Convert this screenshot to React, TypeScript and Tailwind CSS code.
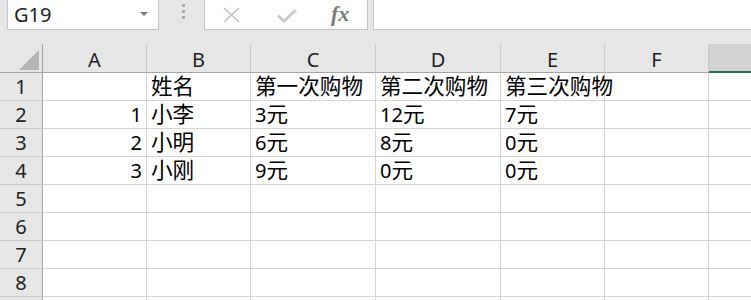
import React from "react";

const cols = [
  { label: "A", w: "w-[104px]" },
  { label: "B", w: "w-[104px]" },
  { label: "C", w: "w-[125px]" },
  { label: "D", w: "w-[125px]" },
  { label: "E", w: "w-[104px]" },
  { label: "F", w: "w-[104px]" },
];

type Cell = { t: string; right?: boolean };
const data: Cell[][] = [
  [{ t: "" }, { t: "姓名" }, { t: "第一次购物" }, { t: "第二次购物" }, { t: "第三次购物" }, { t: "" }],
  [{ t: "1", right: true }, { t: "小李" }, { t: "3元" }, { t: "12元" }, { t: "7元" }, { t: "" }],
  [{ t: "2", right: true }, { t: "小明" }, { t: "6元" }, { t: "8元" }, { t: "0元" }, { t: "" }],
  [{ t: "3", right: true }, { t: "小刚" }, { t: "9元" }, { t: "0元" }, { t: "0元" }, { t: "" }],
  [], [], [], [], [],
];

const font = { fontFamily: '"Noto Sans", "Noto Sans CJK SC", sans-serif' };

function Text({ t }: { t: string }) {
  const parts = t.match(/[\u4e00-\u9fff]+|[^\u4e00-\u9fff]+/g) || [];
  return (
    <span className="relative z-10">
      {parts.map((p, i) =>
        /[\u4e00-\u9fff]/.test(p) ? (
          <span key={i} className="text-[21.6px]">
            {p}
          </span>
        ) : (
          <span key={i}>{p}</span>
        )
      )}
    </span>
  );
}

export default function App() {
  return (
    <div
      className="w-[751px] h-[300px] overflow-hidden bg-[#e6e6e6] text-black"
      style={font}
    >
      {/* formula bar */}
      <div className="flex h-[30px]">
        <div className="ml-[7px] w-[152px] h-[30px] bg-white border border-t-0 border-[#c6c6c6] flex items-center justify-between pl-[6px] pr-[10px]">
          <span className="text-[20px] leading-none text-[#222]">G19</span>
          <svg width="8" height="5" viewBox="0 0 8 5">
            <path d="M0 0 L8 0 L4 4 Z" fill="#7a7a7a" />
          </svg>
        </div>
        <div className="w-[45px] flex justify-center pt-[4px] pl-[3px]">
          <div className="flex flex-col gap-[3px]">
            <div className="w-[3px] h-[3px] bg-[#a8a8a8]" />
            <div className="w-[3px] h-[3px] bg-[#a8a8a8]" />
            <div className="w-[3px] h-[3px] bg-[#a8a8a8]" />
          </div>
        </div>
        <div className="w-[164px] h-[30px] bg-white border border-t-0 border-[#c6c6c6] flex items-center">
          <svg className="ml-[17px]" width="20" height="16" viewBox="0 0 20 16">
            <path d="M2 1 L17 15 M17 1 L2 15" stroke="#c3c3c3" strokeWidth="1.6" />
          </svg>
          <svg className="ml-[35px]" width="20" height="16" viewBox="0 0 20 16">
            <path d="M1 8.5 L7 14 L19 3" stroke="#cdcdcd" strokeWidth="3" fill="none" />
          </svg>
          <span
            className="ml-[34px] text-[22px] leading-none italic font-bold text-[#7a7a7a] -mt-[2px]"
            style={{ fontFamily: '"Liberation Serif", serif' }}
          >
            fx
          </span>
        </div>
        <div className="ml-[5px] flex-1 h-[30px] bg-white border border-t-0 border-r-0 border-[#c6c6c6]" />
      </div>

      <div className="h-[14px]" />

      {/* column header */}
      <div className="flex h-[29px]">
        <div className="w-[43px] h-[29px] border-r border-b border-[#a6a6a6] flex items-end justify-end pr-[3px] pb-[2px]">
          <svg width="20" height="20" viewBox="0 0 20 20">
            <path d="M20 0 L20 20 L0 20 Z" fill="#b5b5b5" />
          </svg>
        </div>
        {cols.map((c) => (
          <div
            key={c.label}
            className={`${c.w} h-[29px] border-b border-b-[#a6a6a6] border-r border-r-[#cacaca] flex items-center justify-center text-[20px] leading-none text-[#222] pt-[3px]`}
          >
            {c.label}
          </div>
        ))}
        <div className="flex-1 h-[29px] bg-[#d2d2d2] border-b-2 border-[#217346]" />
      </div>

      {/* rows */}
      {data.map((row, i) => (
        <div key={i} className="flex h-[28px]">
          <div className="w-[43px] h-[28px] border-r border-r-[#a6a6a6] border-b border-b-[#cacaca] flex items-end justify-center text-[20px] leading-none text-[#222] pb-[3px]">
            {i + 1}
          </div>
          {cols.map((c, j) => {
            const cell = row[j];
            return (
              <div
                key={c.label}
                className={`${c.w} h-[28px] bg-white border-r border-b border-[#d4d4d4] flex items-end px-[4px] pb-[1px] text-[20px] leading-[24px] whitespace-nowrap overflow-visible ${
                  cell && cell.right ? "justify-end" : "justify-start"
                }`}
              >
                {cell ? <Text t={cell.t} /> : ""}
              </div>
            );
          })}
          <div className="flex-1 h-[28px] bg-white border-b border-[#d4d4d4]" />
        </div>
      ))}
    </div>
  );
}
